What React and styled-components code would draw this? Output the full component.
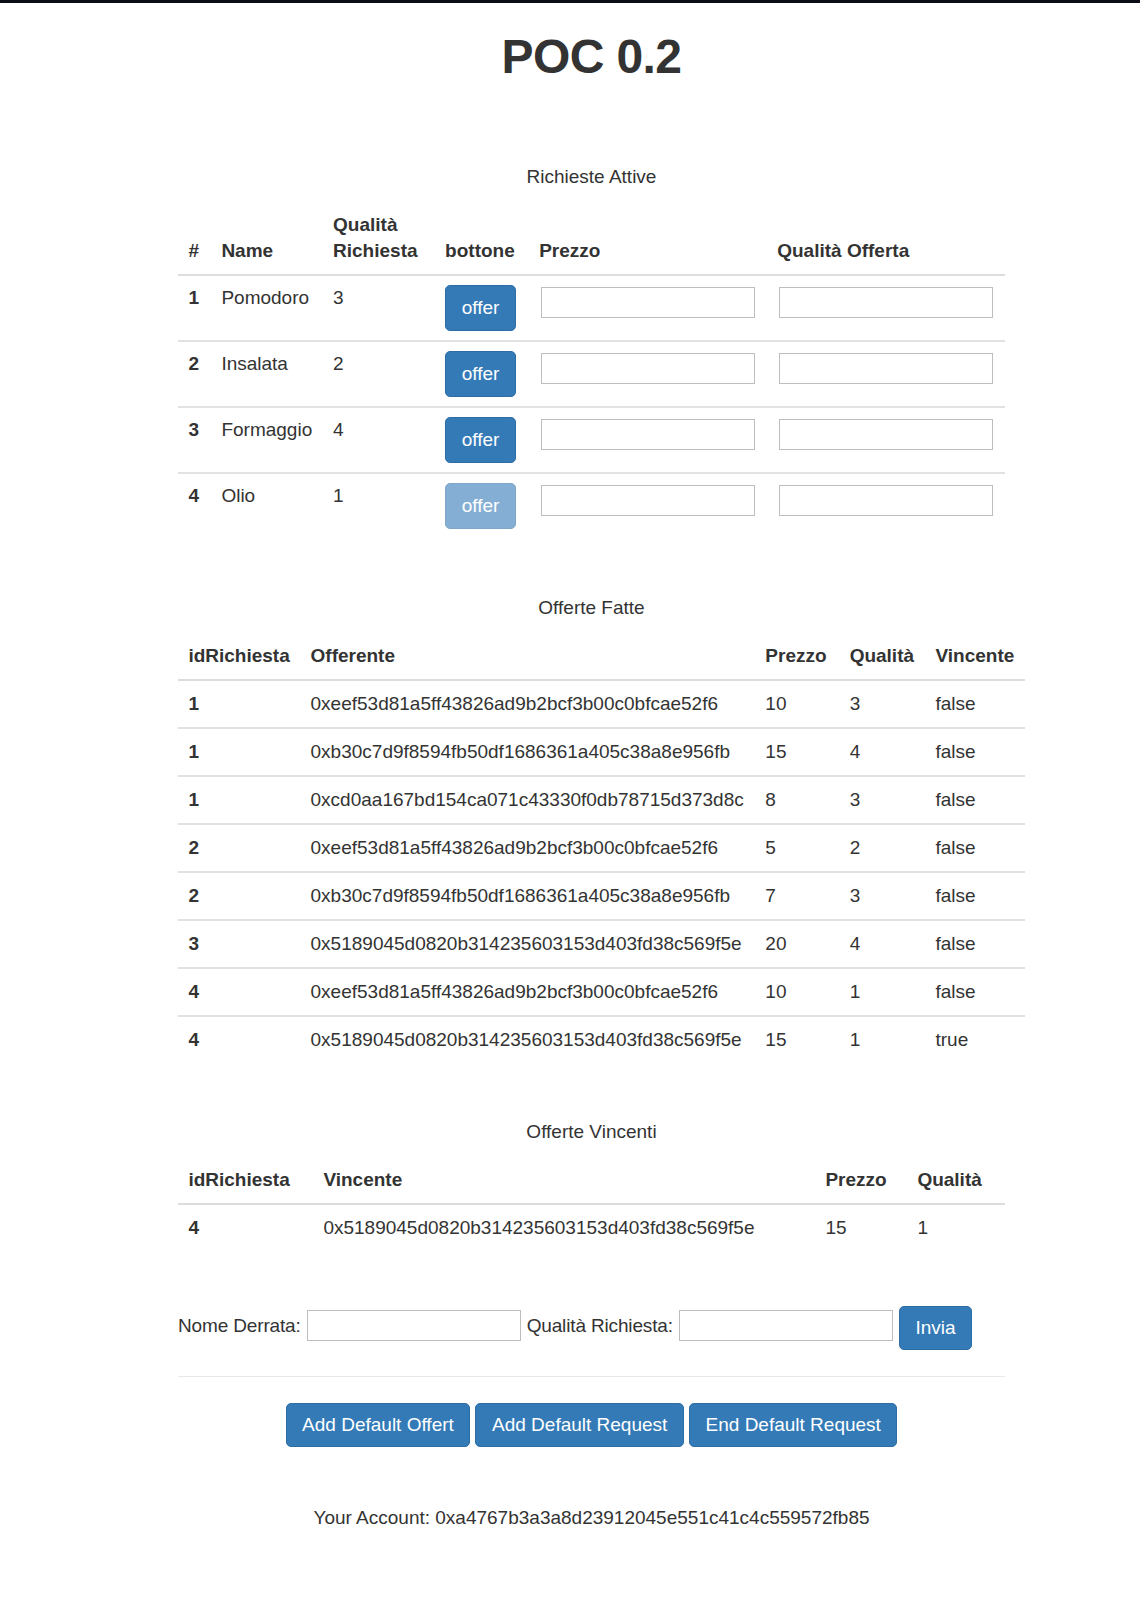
import React from "react";
import styled, { createGlobalStyle } from "styled-components";

const GlobalStyle = createGlobalStyle`
  body {
    margin: 0;
    background: #fff;
    font-family: "Liberation Sans", Arial, sans-serif;
    font-size: 19px;
    line-height: 26px;
    color: #333;
  }
`;

const TopBar = styled.div`
  height: 3px;
  background: #0b0e14;
`;

const Container = styled.div`
  width: 827px;
  margin-left: 178px;
`;

const Title = styled.h1`
  margin: 28px 0 70px;
  text-align: center;
  font-size: 48px;
  line-height: 52.8px;
  font-weight: 700;
  letter-spacing: -0.6px;
  color: #333;
`;

const Table = styled.table`
  width: ${(p) => (p.$width ? `${p.$width}px` : "100%")};
  border-collapse: collapse;
  border-spacing: 0;
  margin-top: ${(p) => p.$top || 0}px;
`;

/* the wide offers table spills past the container, its title stays centred on the container */
const Caption = styled.caption`
  caption-side: top;
  padding: 10.4px ${(p) => p.$shift || 0}px 12px 0;
  text-align: center;
  color: #333;
`;

const HeadCell = styled.th`
  box-sizing: border-box;
  width: ${(p) => p.$w}px;
  padding: 10px 10.4px;
  text-align: left;
  vertical-align: bottom;
  font-weight: 700;
  border-bottom: 2px solid #ddd;
  white-space: ${(p) => (p.$wrap ? "normal" : "nowrap")};
`;

const Cell = styled.td`
  box-sizing: border-box;
  padding: ${(p) => p.$py ?? 10}px 10.4px;
  vertical-align: top;
  border-top: 2px solid #e2e2e2;
  font-weight: ${(p) => (p.$bold ? 700 : 400)};
  white-space: nowrap;
`;

const Button = styled.button`
  display: inline-block;
  padding: ${(p) => (p.$tall ? 9 : 8)}px 15.6px;
  font-family: inherit;
  font-size: 19px;
  line-height: 26px;
  color: #fff;
  background: #337ab7;
  border: 1px solid #2e6da4;
  border-radius: 5px;
  white-space: nowrap;

  &:disabled {
    opacity: 0.6;
  }
`;

const TextInput = styled.input`
  box-sizing: border-box;
  width: 214px;
  height: 31px;
  margin: ${(p) => p.$mt ?? 2}px 0 0 ${(p) => p.$ml ?? 0}px;
  padding: 0 4px;
  border: 1px solid #bebebe;
  background: #fff;
  font-family: inherit;
  font-size: 17px;
`;

const FormRow = styled.div`
  display: flex;
  align-items: flex-start;
  gap: 6px;
  margin-top: 55.5px;
`;

const FormLabel = styled.label`
  margin-top: 7px;
  letter-spacing: -0.15px;
  white-space: nowrap;
`;

const Divider = styled.hr`
  margin: 26px 0;
  border: 0;
  border-top: 1px solid #e8e8e8;
`;

const ButtonBar = styled.div`
  display: flex;
  justify-content: center;
  gap: 5px;
`;

const Account = styled.p`
  margin: 58px 0 0;
  text-align: center;
`;

const requests = [
  { id: 1, name: "Pomodoro", q: 3 },
  { id: 2, name: "Insalata", q: 2 },
  { id: 3, name: "Formaggio", q: 4 },
  { id: 4, name: "Olio", q: 1, done: true },
];

const offers = [
  [1, "0xeef53d81a5ff43826ad9b2bcf3b00c0bfcae52f6", 10, 3, "false"],
  [1, "0xb30c7d9f8594fb50df1686361a405c38a8e956fb", 15, 4, "false"],
  [1, "0xcd0aa167bd154ca071c43330f0db78715d373d8c", 8, 3, "false"],
  [2, "0xeef53d81a5ff43826ad9b2bcf3b00c0bfcae52f6", 5, 2, "false"],
  [2, "0xb30c7d9f8594fb50df1686361a405c38a8e956fb", 7, 3, "false"],
  [3, "0x5189045d0820b314235603153d403fd38c569f5e", 20, 4, "false"],
  [4, "0xeef53d81a5ff43826ad9b2bcf3b00c0bfcae52f6", 10, 1, "false"],
  [4, "0x5189045d0820b314235603153d403fd38c569f5e", 15, 1, "true"],
];

export default function App() {
  return (
    <>
      <GlobalStyle />
      <TopBar />
      <Container>
        <Title>POC 0.2</Title>

        <Table>
          <Caption>Richieste Attive</Caption>
          <thead>
            <tr>
              <HeadCell $w={33}>#</HeadCell>
              <HeadCell $w={111}>Name</HeadCell>
              <HeadCell $w={112} $wrap>Qualità Richiesta</HeadCell>
              <HeadCell $w={94}>bottone</HeadCell>
              <HeadCell $w={238}>Prezzo</HeadCell>
              <HeadCell $w={238}>Qualità Offerta</HeadCell>
            </tr>
          </thead>
          <tbody>
            {requests.map((r) => (
              <tr key={r.id}>
                <Cell $py={9} $bold>{r.id}</Cell>
                <Cell $py={9}>{r.name}</Cell>
                <Cell $py={9}>{r.q}</Cell>
                <Cell $py={9}>
                  <Button $tall disabled={r.done}>offer</Button>
                </Cell>
                <Cell $py={9}>
                  <TextInput type="text" $ml={2} />
                </Cell>
                <Cell $py={9}>
                  <TextInput type="text" $ml={2} />
                </Cell>
              </tr>
            ))}
          </tbody>
        </Table>

        <Table $top={46.5} $width={847}>
          <Caption $shift={20}>Offerte Fatte</Caption>
          <thead>
            <tr>
              <HeadCell $w={121}>idRichiesta</HeadCell>
              <HeadCell $w={455}>Offerente</HeadCell>
              <HeadCell $w={85}>Prezzo</HeadCell>
              <HeadCell $w={86}>Qualità</HeadCell>
              <HeadCell $w={100}>Vincente</HeadCell>
            </tr>
          </thead>
          <tbody>
            {offers.map((o, i) => (
              <tr key={i}>
                <Cell $bold>{o[0]}</Cell>
                <Cell>{o[1]}</Cell>
                <Cell>{o[2]}</Cell>
                <Cell>{o[3]}</Cell>
                <Cell>{o[4]}</Cell>
              </tr>
            ))}
          </tbody>
        </Table>

        <Table $top={45.5}>
          <Caption>Offerte Vincenti</Caption>
          <thead>
            <tr>
              <HeadCell $w={135}>idRichiesta</HeadCell>
              <HeadCell $w={502}>Vincente</HeadCell>
              <HeadCell $w={92}>Prezzo</HeadCell>
              <HeadCell $w={98}>Qualità</HeadCell>
            </tr>
          </thead>
          <tbody>
            <tr>
              <Cell $bold>4</Cell>
              <Cell>0x5189045d0820b314235603153d403fd38c569f5e</Cell>
              <Cell>15</Cell>
              <Cell>1</Cell>
            </tr>
          </tbody>
        </Table>

        <FormRow>
          <FormLabel>Nome Derrata:</FormLabel>
          <TextInput type="text" $mt={4} />
          <FormLabel>Qualità Richiesta:</FormLabel>
          <TextInput type="text" $mt={4} />
          <Button>Invia</Button>
        </FormRow>

        <Divider />

        <ButtonBar>
          <Button>Add Default Offert</Button>
          <Button>Add Default Request</Button>
          <Button>End Default Request</Button>
        </ButtonBar>

        <Account>Your Account: 0xa4767b3a3a8d23912045e551c41c4c559572fb85</Account>
      </Container>
    </>
  );
}
